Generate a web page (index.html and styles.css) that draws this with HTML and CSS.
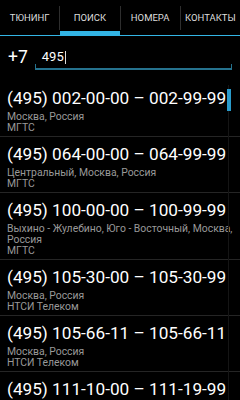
FILE: index.html
```html
<!DOCTYPE html>
<html lang="ru">
<head>
<meta charset="utf-8">
<link rel="stylesheet" href="styles.css">
</head>
<body>
<div class="app">
  <div class="tabs">
    <div class="tab">ТЮНИНГ</div>
    <div class="sep"></div>
    <div class="tab selected">ПОИСК</div>
    <div class="sep"></div>
    <div class="tab">НОМЕРА</div>
    <div class="sep"></div>
    <div class="tab">КОНТАКТЫ</div>
  </div>
  <div class="search">
    <span class="prefix">+7</span>
    <div class="field"><span class="value">495</span><span class="cursor"></span></div>
  </div>
  <div class="list">
    <div class="item">
      <div class="title">(495) 002-00-00 – 002-99-99</div>
      <div class="sub">Москва, Россия</div>
      <div class="sub">МГТС</div>
    </div>
    <div class="item">
      <div class="title">(495) 064-00-00 – 064-99-99</div>
      <div class="sub">Центральный, Москва, Россия</div>
      <div class="sub">МГТС</div>
    </div>
    <div class="item">
      <div class="title">(495) 100-00-00 – 100-99-99</div>
      <div class="sub">Выхино - Жулебино, Юго - Восточный, Москва, Россия</div>
      <div class="sub">МГТС</div>
    </div>
    <div class="item">
      <div class="title">(495) 105-30-00 – 105-30-99</div>
      <div class="sub">Москва, Россия</div>
      <div class="sub">НТСИ Телеком</div>
    </div>
    <div class="item">
      <div class="title">(495) 105-66-11 – 105-66-11</div>
      <div class="sub">Москва, Россия</div>
      <div class="sub">НТСИ Телеком</div>
    </div>
    <div class="item">
      <div class="title">(495) 111-10-00 – 111-19-99</div>
      <div class="sub">Москва, Россия</div>
      <div class="sub">МГТС</div>
    </div>
    <div class="scrollbar"><div class="thumb"></div></div>
  </div>
</div>
</body>
</html>
```
FILE: styles.css
```css
html, body {
  margin: 0;
  padding: 0;
  background: #000;
}
body {
  font-family: Roboto, "Noto Sans", sans-serif;
  color: #fff;
  width: 240px;
  height: 400px;
  overflow: hidden;
}
.app {
  display: flex;
  flex-direction: column;
  height: 400px;
}
.tabs {
  display: flex;
  height: 36px;
  box-sizing: border-box;
  border-bottom: 1px solid #33b5e5;
  flex-shrink: 0;
}
.tab {
  flex: 1;
  display: flex;
  align-items: center;
  justify-content: center;
  font-size: 9.5px;
  color: #ddd;
  box-sizing: border-box;
}
.tab.selected {
  border-bottom: 4px solid #33b5e5;
  padding-top: 4px;
}
.sep {
  width: 1px;
  background: #2e2e2e;
  margin: 6px 0 5px;
}
.search {
  display: flex;
  align-items: flex-start;
  height: 45px;
  padding: 11px 0 0 8px;
  box-sizing: border-box;
  flex-shrink: 0;
}
.prefix {
  font-size: 17.5px;
  line-height: 20px;
  color: #fff;
}
.field {
  margin-left: 7px;
  width: 197px;
  height: 23px;
  box-sizing: border-box;
  padding-left: 7px;
  display: flex;
  align-items: flex-start;
  border-bottom: 2px solid #25728e;
  background:
    linear-gradient(#25728e, #25728e) left bottom / 1px 4px no-repeat,
    linear-gradient(#25728e, #25728e) right bottom / 1px 4px no-repeat;
}
.value {
  font-size: 13px;
  line-height: 20px;
  color: #fff;
}
.cursor {
  width: 1px;
  height: 13px;
  margin-top: 4px;
  margin-left: 1px;
  background: #ddd;
}
.list {
  position: relative;
  flex: 1;
  overflow: hidden;
}
.item {
  padding: 7px 0 3px 7px;
  border-bottom: 1px solid #252525;
  white-space: nowrap;
}
.title {
  font-size: 17.2px;
  line-height: 20px;
  color: #fff;
  margin-bottom: 3px;
}
.sub {
  font-size: 10.4px;
  line-height: 11px;
  color: #999;
  white-space: normal;
}
.scrollbar {
  position: absolute;
  top: 4px;
  bottom: 0;
  left: 228px;
  width: 1px;
  background: #151515;
}
.thumb {
  position: absolute;
  top: 4px;
  left: -1px;
  width: 4px;
  height: 22px;
  background: #2a9bca;
}
```
